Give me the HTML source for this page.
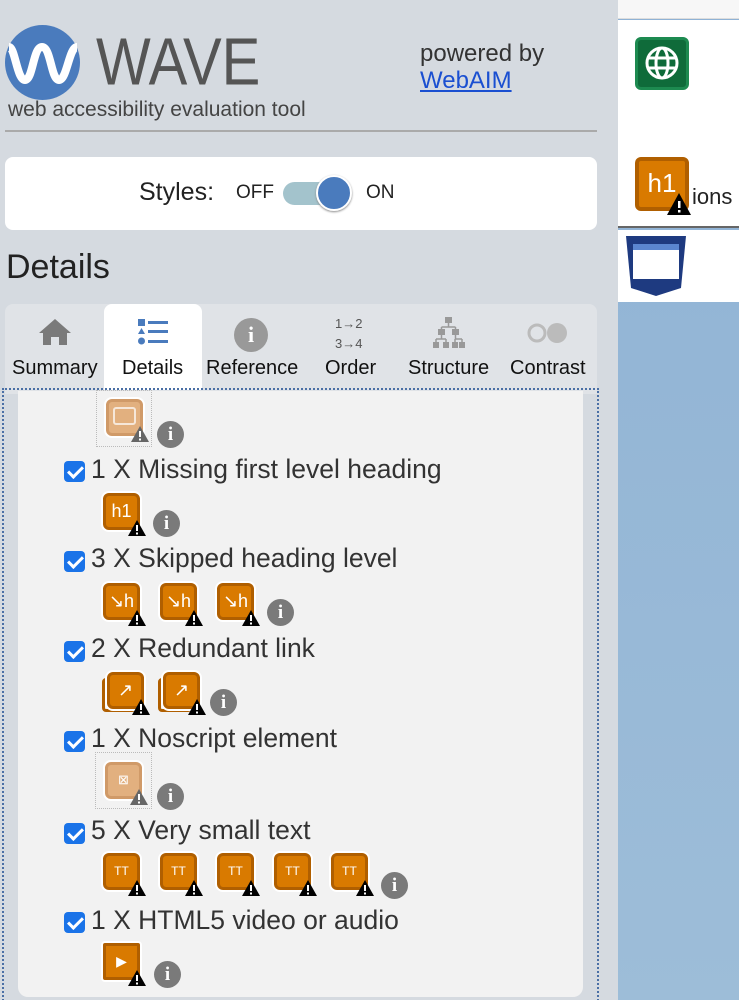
<!DOCTYPE html>
<html><head><meta charset="utf-8"><style>
*{margin:0;padding:0;box-sizing:border-box}
html,body{width:739px;height:1000px;overflow:hidden}
body{background:#d5dae0;font-family:"Liberation Sans",Arial,sans-serif;color:#333;position:relative}
.a{position:absolute}
.ic{position:absolute;width:37px;height:37px;background:#d97a00;border:3px solid #b05f00;border-radius:6px;box-shadow:0 0 0 2px #fff;color:#fff;font-size:18px;text-align:center;line-height:30px}
.fd{background:#e2b07f;border-color:#d09a68}
.wr{position:absolute;right:-10px;bottom:-10px;width:20px;height:18px}
.inf{position:absolute;width:27px;height:27px;border-radius:50%;background:#7a7a7a;color:#fff;font-weight:bold;font-size:19px;text-align:center;line-height:27px;font-family:"Liberation Serif",serif}
.cb{position:absolute;width:21px;height:21px;background:#1a73e8;border-radius:4px;left:64px}
.cb:after{content:"";position:absolute;left:7px;top:2px;width:6px;height:12px;border:solid #fff;border-width:0 3px 3px 0;transform:rotate(45deg)}
.lb{position:absolute;left:91px;font-size:26.5px;color:#333;line-height:28px}
.tab{position:absolute;top:357px;font-size:20px;color:#111;text-align:center}
</style></head><body>
<svg class="a" style="left:5px;top:25px" width="75" height="75" viewBox="0 0 75 75"><circle cx="37.5" cy="37.5" r="37.5" fill="#4a7bbd"/><path d="M4 22 C10 22 12 55 20 55 C28 55 28 22 37 22 C46 22 46 55 54 55 C62 55 64 22 72 22" stroke="#fff" stroke-width="8" fill="none"/></svg>
<div class="a" style="left:96px;top:26px;font-size:58px;color:#555;line-height:64px;transform:scaleY(1.15);transform-origin:left top">WAVE</div>
<div class="a" style="left:8px;top:98px;font-size:21px;color:#444">web accessibility evaluation tool</div>
<div class="a" style="left:5px;top:130px;width:592px;height:2px;background:#aaa"></div>
<div class="a" style="left:420px;top:40px;font-size:24px;color:#333;line-height:27px">powered by<br><span style="color:#1a4fd1;text-decoration:underline">WebAIM</span></div>
<div class="a" style="left:5px;top:157px;width:592px;height:73px;background:#fff;border-radius:8px"></div>
<div class="a" style="left:139px;top:178px;font-size:25px;color:#222">Styles:</div>
<div class="a" style="left:236px;top:182px;font-size:19px;color:#222">OFF</div>
<div class="a" style="left:283px;top:182px;width:62px;height:23px;background:#a3c3cc;border-radius:12px"></div>
<div class="a" style="left:316px;top:175px;width:36px;height:36px;background:#4a7bbd;border-radius:50%;border:2px solid #fff;box-shadow:0 1px 2px #888"></div>
<div class="a" style="left:366px;top:182px;font-size:19px;color:#222">ON</div>
<div class="a" style="left:6px;top:248px;font-size:34px;color:#222">Details</div>
<div class="a" style="left:5px;top:304px;width:592px;height:90px;background:#e0e3e7;border-radius:8px 8px 0 0"></div>
<div class="a" style="left:104px;top:304px;width:98px;height:86px;background:#fff;border-radius:8px 8px 0 0"></div>
<svg class="a" style="left:38px;top:318px" width="34" height="28"><path d="M17 1 L33 15 L29 15 L29 27 L21 27 L21 19 L13 19 L13 27 L5 27 L5 15 L1 15Z" fill="#7a7a7a"/></svg>
<svg class="a" style="left:137px;top:318px" width="32" height="28"><rect x="1" y="1" width="7" height="7" fill="#4a7bbd"/><path d="M4.5 10 L8 16 L1 16Z" fill="#4a7bbd"/><circle cx="4.5" cy="23" r="3.5" fill="#4a7bbd"/><rect x="11" y="3" width="20" height="3" fill="#4a7bbd"/><rect x="11" y="12" width="20" height="3" fill="#4a7bbd"/><rect x="11" y="22" width="20" height="3" fill="#4a7bbd"/></svg>
<div class="inf" style="left:234px;top:318px;width:34px;height:34px;line-height:34px;font-size:22px;background:#999">i</div>
<div class="a" style="left:335px;top:314px;font-size:13px;color:#555;line-height:20px;text-align:center">1→2<br>3→4</div>
<svg class="a" style="left:432px;top:317px" width="34" height="34"><g fill="#999"><rect x="13" y="0" width="7" height="6"/><rect x="6" y="12" width="7" height="6"/><rect x="20" y="12" width="7" height="6"/><rect x="1" y="25" width="6" height="6"/><rect x="11" y="25" width="6" height="6"/><rect x="20" y="25" width="6" height="6"/><rect x="27" y="25" width="6" height="6"/></g><path d="M16.5 6v4M9.5 10h14M9.5 10v2M23.5 10v2M9.5 18v4M4 22h10M4 22v3M14 22v3M23.5 18v4M23 22h7M23 22v3M30 22v3" stroke="#999" stroke-width="1.5" fill="none"/></svg>
<svg class="a" style="left:527px;top:322px" width="42" height="22"><circle cx="10" cy="11" r="8" fill="none" stroke="#bbb" stroke-width="3"/><circle cx="30" cy="11" r="10" fill="#bbb"/></svg>
<div class="tab" style="left:12px">Summary</div>
<div class="tab" style="left:122px">Details</div>
<div class="tab" style="left:206px">Reference</div>
<div class="tab" style="left:325px">Order</div>
<div class="tab" style="left:408px">Structure</div>
<div class="tab" style="left:510px">Contrast</div>
<div class="a" style="left:2px;top:388px;width:597px;height:620px;border:2px dotted #4a6fa5;border-bottom:none"></div>
<div class="a" style="left:18px;top:391px;width:565px;height:606px;background:#f2f2f2;border-radius:0 0 10px 10px"></div>

<div class="a" style="left:96px;top:390px;width:56px;height:57px;border:1px dotted #bbb"></div>
<div class="ic fd" style="left:106px;top:399px"><div style="margin:5px 4px;height:18px;border:2px solid #fff;border-radius:3px;opacity:.7"></div><svg class="wr" viewBox="0 0 20 18"><path d="M10 1 L19 17 L1 17Z" fill="#666"/><rect x="9" y="6" width="2" height="6" fill="#fff"/><rect x="9" y="13.5" width="2" height="2" fill="#fff"/></svg></div>
<div class="inf" style="left:157px;top:421px">i</div>

<div class="cb" style="left:64px;top:461px"></div><div class="lb" style="top:455px">1 X Missing first level heading</div>
<div class="ic" style="left:103px;top:493px">h1<svg class="wr" viewBox="0 0 20 18"><path d="M10 1 L19 17 L1 17Z" fill="#000"/><rect x="9" y="6" width="2" height="6" fill="#fff"/><rect x="9" y="13.5" width="2" height="2" fill="#fff"/></svg></div>
<div class="inf" style="left:153px;top:510px">i</div>

<div class="cb" style="top:551px"></div><div class="lb" style="top:544px">3 X Skipped heading level</div>
<div class="ic" style="left:103px;top:583px">↘h<svg class="wr" viewBox="0 0 20 18"><path d="M10 1 L19 17 L1 17Z"/><rect x="9" y="6" width="2" height="6" fill="#fff"/><rect x="9" y="13.5" width="2" height="2" fill="#fff"/></svg></div>
<div class="ic" style="left:160px;top:583px">↘h<svg class="wr" viewBox="0 0 20 18"><path d="M10 1 L19 17 L1 17Z"/><rect x="9" y="6" width="2" height="6" fill="#fff"/><rect x="9" y="13.5" width="2" height="2" fill="#fff"/></svg></div>
<div class="ic" style="left:217px;top:583px">↘h<svg class="wr" viewBox="0 0 20 18"><path d="M10 1 L19 17 L1 17Z"/><rect x="9" y="6" width="2" height="6" fill="#fff"/><rect x="9" y="13.5" width="2" height="2" fill="#fff"/></svg></div>
<div class="inf" style="left:267px;top:599px">i</div>

<div class="cb" style="top:641px"></div><div class="lb" style="top:634px">2 X Redundant link</div>
<div class="a" style="left:102px;top:678px;width:34px;height:34px;border:3px solid #b05f00;border-radius:4px"></div>
<div class="ic" style="left:107px;top:672px">↗<svg class="wr" viewBox="0 0 20 18"><path d="M10 1 L19 17 L1 17Z"/><rect x="9" y="6" width="2" height="6" fill="#fff"/><rect x="9" y="13.5" width="2" height="2" fill="#fff"/></svg></div>
<div class="a" style="left:158px;top:678px;width:34px;height:34px;border:3px solid #b05f00;border-radius:4px"></div>
<div class="ic" style="left:163px;top:672px">↗<svg class="wr" viewBox="0 0 20 18"><path d="M10 1 L19 17 L1 17Z"/><rect x="9" y="6" width="2" height="6" fill="#fff"/><rect x="9" y="13.5" width="2" height="2" fill="#fff"/></svg></div>
<div class="inf" style="left:210px;top:689px">i</div>

<div class="cb" style="top:731px"></div><div class="lb" style="top:724px">1 X Noscript element</div>
<div class="a" style="left:95px;top:752px;width:57px;height:57px;border:1px dotted #bbb"></div>
<div class="ic fd" style="left:105px;top:762px;font-size:13px">⊠<svg class="wr" viewBox="0 0 20 18"><path d="M10 1 L19 17 L1 17Z" fill="#666"/><rect x="9" y="6" width="2" height="6" fill="#fff"/><rect x="9" y="13.5" width="2" height="2" fill="#fff"/></svg></div>
<div class="inf" style="left:157px;top:783px">i</div>

<div class="cb" style="top:823px"></div><div class="lb" style="top:816px">5 X Very small text</div>
<div class="ic" style="left:103px;top:853px;font-size:12px">TT<svg class="wr" viewBox="0 0 20 18"><path d="M10 1 L19 17 L1 17Z"/><rect x="9" y="6" width="2" height="6" fill="#fff"/><rect x="9" y="13.5" width="2" height="2" fill="#fff"/></svg></div>
<div class="ic" style="left:160px;top:853px;font-size:12px">TT<svg class="wr" viewBox="0 0 20 18"><path d="M10 1 L19 17 L1 17Z"/><rect x="9" y="6" width="2" height="6" fill="#fff"/><rect x="9" y="13.5" width="2" height="2" fill="#fff"/></svg></div>
<div class="ic" style="left:217px;top:853px;font-size:12px">TT<svg class="wr" viewBox="0 0 20 18"><path d="M10 1 L19 17 L1 17Z"/><rect x="9" y="6" width="2" height="6" fill="#fff"/><rect x="9" y="13.5" width="2" height="2" fill="#fff"/></svg></div>
<div class="ic" style="left:274px;top:853px;font-size:12px">TT<svg class="wr" viewBox="0 0 20 18"><path d="M10 1 L19 17 L1 17Z"/><rect x="9" y="6" width="2" height="6" fill="#fff"/><rect x="9" y="13.5" width="2" height="2" fill="#fff"/></svg></div>
<div class="ic" style="left:331px;top:853px;font-size:12px">TT<svg class="wr" viewBox="0 0 20 18"><path d="M10 1 L19 17 L1 17Z"/><rect x="9" y="6" width="2" height="6" fill="#fff"/><rect x="9" y="13.5" width="2" height="2" fill="#fff"/></svg></div>
<div class="inf" style="left:381px;top:872px">i</div>

<div class="cb" style="top:912px"></div><div class="lb" style="top:906px">1 X HTML5 video or audio</div>
<div class="ic" style="left:103px;top:943px;border-radius:2px;font-size:14px">▶<svg class="wr" viewBox="0 0 20 18"><path d="M10 1 L19 17 L1 17Z"/><rect x="9" y="6" width="2" height="6" fill="#fff"/><rect x="9" y="13.5" width="2" height="2" fill="#fff"/></svg></div>
<div class="inf" style="left:154px;top:961px">i</div>

<div class="a" style="left:618px;top:0;width:121px;height:1000px;background:linear-gradient(#8fb2d5,#9dbdd8)"></div>
<div class="a" style="left:618px;top:0;width:121px;height:19px;background:#f7f7f7;border-bottom:1px solid #ddd"></div>
<div class="a" style="left:618px;top:20px;width:121px;height:208px;background:#fff;border-bottom:2px solid #666"></div>
<div class="a" style="left:618px;top:230px;width:121px;height:72px;background:#fff"></div>
<div class="a" style="left:635px;top:37px;width:54px;height:53px;background:#0f6b3a;border-radius:6px;border:3px solid #1d8a50"></div>
<svg class="a" style="left:643px;top:44px" width="38" height="38" viewBox="0 0 38 38"><circle cx="19" cy="19" r="15" fill="none" stroke="#fff" stroke-width="3"/><ellipse cx="19" cy="19" rx="6" ry="15" fill="none" stroke="#fff" stroke-width="3"/><path d="M4 14h30M4 24h30" stroke="#fff" stroke-width="3"/></svg>
<div class="a" style="left:635px;top:157px;width:54px;height:54px;background:#d97a00;border:4px solid #b05f00;border-radius:6px;color:#fff;font-size:26px;text-align:center;line-height:44px">h1</div>
<svg class="a" style="left:666px;top:192px" width="26" height="24"><path d="M13 1 L25 23 L1 23Z"/><rect x="12" y="9" width="2.5" height="7" fill="#fff"/><rect x="12" y="18" width="2.5" height="2.5" fill="#fff"/></svg>
<div class="a" style="left:692px;top:184px;font-size:22px;color:#222">ions</div>
<svg class="a" style="left:625px;top:235px" width="62" height="62" viewBox="0 0 62 62"><path d="M1 1h60l-5 52-25 8-25-8z" fill="#1e3a80"/><rect x="8" y="9" width="46" height="35" fill="#fff"/><rect x="8" y="9" width="46" height="6" fill="#5b86d0"/></svg>
</body></html>
